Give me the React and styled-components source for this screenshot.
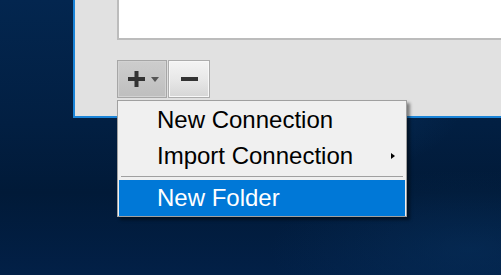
import React from 'react'
import styled, { createGlobalStyle } from 'styled-components'

const Global = createGlobalStyle`
  html, body {
    margin: 0;
    padding: 0;
    overflow: hidden;
  }
  body {
    font-family: "Liberation Sans", Arial, sans-serif;
  }
`

const Desktop = styled.div`
  position: relative;
  width: 501px;
  height: 275px;
  overflow: hidden;
  background:
    radial-gradient(ellipse 160px 70px at 300px 110px, rgba(10, 60, 110, 0.55), transparent),
    radial-gradient(ellipse 200px 80px at 470px 250px, rgba(8, 50, 95, 0.5), transparent),
    linear-gradient(180deg, #03264f 0%, #021f42 45%, #011a38 70%, #022047 100%);
`

const Window = styled.div`
  box-sizing: border-box;
  margin-left: 73px;
  width: 428px;
  height: 118px;
  background: #e1e1e1;
  border-left: 2px solid #1a84d8;
  border-bottom: 2px solid #1a84d8;
  padding-left: 42px;
`

const ListBox = styled.div`
  box-sizing: border-box;
  height: 40px;
  background: #ffffff;
  border-left: 2px solid #bcbcbc;
  border-bottom: 2px solid #bcbcbc;
`

const Toolbar = styled.div`
  display: flex;
  gap: 1px;
  margin-top: 20px;
`

const DropWrap = styled.div`
  position: relative;
`

const ToolButton = styled.div`
  box-sizing: border-box;
  width: ${p => p.$width}px;
  height: 38px;
  display: flex;
  align-items: center;
  justify-content: center;
  gap: 6px;
  border: 1px solid ${p => (p.$pressed ? '#a6a6a6' : '#adadad')};
  box-shadow: inset 0 0 0 1px ${p => (p.$pressed ? '#d2d2d2' : '#f8f8f8')};
  background: ${p =>
    p.$pressed
      ? 'linear-gradient(180deg, #cdcdcd 0%, #c6c6c6 50%, #bebebe 100%)'
      : 'linear-gradient(180deg, #f4f4f4 0%, #e8e8e8 50%, #d6d6d6 100%)'};
  padding-left: ${p => p.$padLeft || 0}px;
`

const Menu = styled.div`
  position: absolute;
  top: calc(100% + 2px);
  left: 0;
  z-index: 5;
  box-sizing: border-box;
  width: 290px;
  background: #f0f0f0;
  border: 1px solid #a0a0a0;
  padding: 1px 1px 0 1px;
  box-shadow: 3px 3px 3px rgba(0, 0, 0, 0.45);
`

const Item = styled.div`
  position: relative;
  height: 36px;
  line-height: 36px;
  padding-left: 38px;
  font-size: 24px;
  color: ${p => (p.$active ? '#ffffff' : '#000000')};
  background: ${p => (p.$active ? '#0078d7' : 'transparent')};
  white-space: nowrap;
`

const SubArrow = styled.span`
  position: absolute;
  right: 10px;
  top: 15px;
  width: 0;
  height: 0;
  border-top: 3.5px solid transparent;
  border-bottom: 3.5px solid transparent;
  border-left: 4px solid #000;
`

const Separator = styled.div`
  height: 1px;
  margin: 2px 2px 3px 2px;
  background: #a0a0a0;
`

const PlusIcon = () => (
  <svg width="17" height="16" viewBox="0 0 17 16">
    <rect x="0" y="6" width="17" height="4" fill="#333" />
    <rect x="6.5" y="0" width="4" height="16" fill="#333" />
  </svg>
)

const Caret = () => (
  <svg width="8" height="5" viewBox="0 0 8 5">
    <path d="M0 0 H8 L4 5 Z" fill="#555" />
  </svg>
)

const MinusIcon = () => (
  <svg width="17" height="4" viewBox="0 0 17 4">
    <rect x="0" y="0" width="17" height="4" fill="#333" />
  </svg>
)

export default function App() {
  return (
    <>
      <Global />
      <Desktop>
        <Window>
          <ListBox />
          <Toolbar>
            <DropWrap>
              <ToolButton $pressed $width={50} $padLeft={2}>
                <PlusIcon />
                <Caret />
              </ToolButton>
              <Menu>
                <Item>New Connection</Item>
                <Item>
                  Import Connection
                  <SubArrow />
                </Item>
                <Separator />
                <Item $active>New Folder</Item>
              </Menu>
            </DropWrap>
            <ToolButton $width={42}>
              <MinusIcon />
            </ToolButton>
          </Toolbar>
        </Window>
      </Desktop>
    </>
  )
}
